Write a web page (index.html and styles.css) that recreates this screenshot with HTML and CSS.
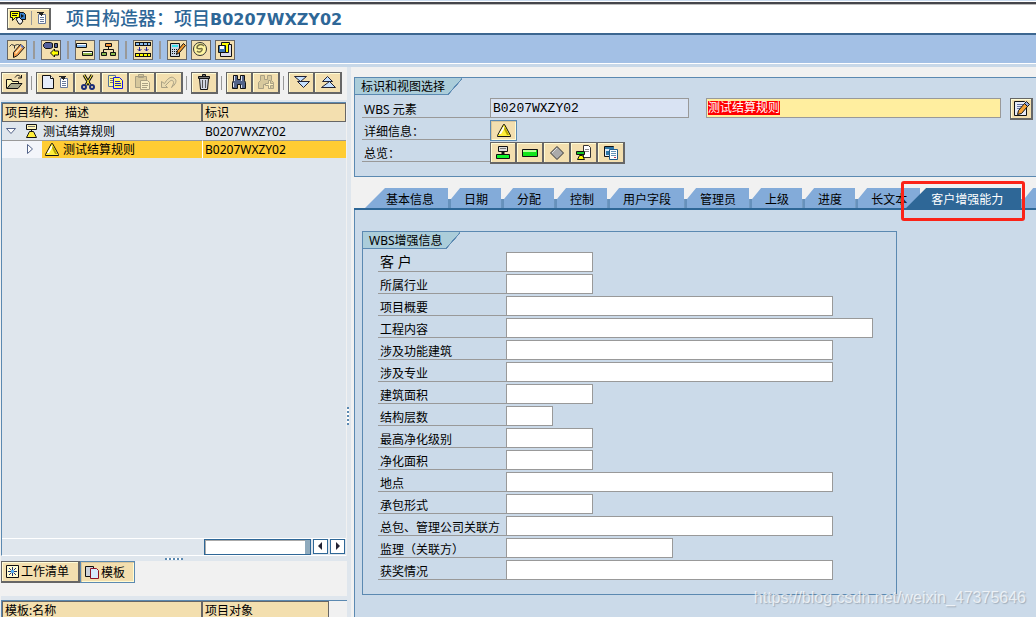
FILE: index.html
```html
<!DOCTYPE html>
<html lang="zh-CN">
<head>
<meta charset="utf-8">
<meta name="viewport" content="width=device-width, initial-scale=1">
<title>项目构造器：项目B0207WXZY02</title>
<link rel="stylesheet" href="styles.css">
</head>
<body>
<svg class="defs" aria-hidden="true">
  <symbol id="i-menu" viewBox="0 0 12 16"><path fill="#fff" stroke="#68799a" d="M2.500 4.500h7v9h-7z"/><path fill="#222" d="M1 2h7v1H7v2H6v1H5V5H4V4H3V3H1z"/><path stroke="#68799a" d="M4 7.500h4M4 9.500h4M4 11.500h4"/></symbol>
  <symbol id="i-tri" viewBox="0 0 16 16"><path fill="#ffef3a" stroke="#111" stroke-linejoin="round" d="M7.500 1.500h1l6 11v1h-13v-1z"/><path fill="#fff" d="M7 4h1v2L5 11H3z"/><path fill="#b5a400" d="M9 4l4 8h-2L8 6z"/></symbol>
  <symbol id="i-binoc" viewBox="0 0 18 18"><path fill="#536389" stroke="#111" d="M3.500 2.500h4v4h3v-4h4v5l1 2v6h-5v-4h-3v4h-5v-6l1-2z"/><path fill="#dfe5f5" d="M4 3h1v5H4zM11 3h1v5h-1zM3 10h1v4H3zM11 12h1v3h-1z"/></symbol>
</svg>

<header class="titlebar">
  <button class="btn title-btn" aria-label="服务">
    <svg width="17" height="16" viewBox="0 0 17 16"><path fill="#ff0" stroke="#111" d="M.5 1.500h9v6h-4l-3 3v-3h-2z"/><path stroke="#111" d="M2 3.500h6M2 5.500h5"/><path fill="#3982cd" stroke="#111" d="M9.500 2.500h4l2 2v5h-6z"/><path fill="#111" d="m11 4 3 2-3 2z"/><path fill="#eee" stroke="#111" d="m6 9 3-2 4 4-2 3H9z"/></svg>
    <span class="bar"></span>
    <svg width="12" height="16"><use href="#i-menu"/></svg>
  </button>
  <h1>项目构造器：项目<b>B0207WXZY02</b></h1>
</header>

<div class="appbar">
  <button class="flat" aria-label="更改"><svg width="18" height="18" viewBox="0 0 18 18"><path fill="none" stroke="#333" d="m1.500 5.500 2-2 3 1v3M6.500 4.500l3-1 3 1"/><path fill="#f29a4a" stroke="#111" d="m5.500 11.500 7-8 4 3-7 8-4 2z"/><path fill="#ffe9b8" d="m7 12 6-7 1 1-6 7z"/><path fill="#5f77c8" d="m12.500 4.500 1-1 2 2-1 2z"/></svg></button>
  <span class="sep"></span>
  <button class="flat" aria-label="转到"><svg width="18" height="18" viewBox="0 0 18 18"><path fill="#53609c" stroke="#111" d="M3.500 1.500h5l2 1v4l-2 1h-5l-2-2v-2z"/><path fill="#53609c" stroke="#111" d="M12.500 2.500h3v4h-3z"/><path fill="#ff0" stroke="#111" d="m8.500 12 4-4v2h4v4h-4v2z"/></svg></button>
  <span class="sep"></span>
  <button class="flat" aria-label="甘特图"><svg width="18" height="18" viewBox="0 0 18 18"><path fill="#8bbced" stroke="#111" d="M.5 2.500h10v4H.5z"/><path fill="#8fb34b" stroke="#111" d="M6.500 10.500h10v4h-10z"/><path stroke="#fff" d="M1 3.500h9M7 11.500h9"/></svg></button>
  <button class="flat" aria-label="层次图"><svg width="18" height="18" viewBox="0 0 18 18"><path fill="none" stroke="#111" d="M8.500 5v3M3.500 11V8.500h10V11"/><path fill="#f5963a" stroke="#111" d="M5.500 2.500h6v3h-6z"/><path fill="#86b64c" stroke="#111" d="M1.500 11.500h5v3h-5zM10.500 11.500h5v3h-5z"/></svg></button>
  <span class="sep"></span>
  <button class="flat" aria-label="网络"><svg width="18" height="18" viewBox="0 0 18 18"><path fill="#111" d="M1 1h16v4H1zM1 12h16v4H1z"/><path fill="#8bbced" d="M2 2h3v2H2zM6 2h3v2H6zM10 2h3v2h-3zM14 2h2v2h-2z"/><path fill="#ff0" d="M2 13h3v2H2zM6 13h3v2H6zM10 13h3v2h-3zM14 13h2v2h-2z"/><path stroke="#229" fill="none" d="M5.500 6v4M3.500 8l2 2 2-2M12.500 6v4M10.500 8l2 2 2-2"/></svg></button>
  <span class="sep"></span>
  <button class="flat" aria-label="计算"><svg width="18" height="18" viewBox="0 0 18 18"><path fill="#c9d5e1" stroke="#111" d="M2.500 2.500h9v13h-9z"/><path fill="#3de2ed" d="M4 4h6v2H4z"/><path stroke="#111" stroke-dasharray="1 1" d="M4 8.500h6M4 10.500h6M4 12.500h6"/><path fill="#f19a31" stroke="#111" d="m9.500 9.500 6-7 2 2-6 7-3 2z"/></svg></button>
  <button class="flat" aria-label="成本"><svg width="18" height="18" viewBox="0 0 18 18"><circle cx="8" cy="8" r="6.500" fill="#fff6a0" stroke="#333"/><path stroke="#777044" stroke-width="1.500" fill="none" d="M12 5C9 2 5 4 5 7c2 2 6-1 5 2-1 2-3 3-5 1"/></svg></button>
  <button class="flat" aria-label="文档"><svg width="18" height="18" viewBox="0 0 18 18"><path fill="#ff0" stroke="#111" d="M5.500 1.500h8v10h-8z"/><path fill="#d9dcef" stroke="#111" d="M12.500 3.500h3v12h-11v-4h8z"/><path fill="#3a75b4" stroke="#111" d="M2.500 4.500h7v7h-7z"/><path fill="#fff" d="M4 5h4v3H4z"/></svg></button>
</div>

<main class="workspace">
  <section class="left">
    <div class="toolbar">
      <button class="btn" aria-label="打开"><svg width="18" height="18" viewBox="0 0 18 18"><path fill="none" stroke="#111" d="M10 4.500c2-3 4-3 6 0M16.500 2v3H13"/><path fill="#fff6b7" stroke="#111" d="M1.500 15.500v-9h5l1 2h6v3"/><path fill="#a6a68a" stroke="#111" d="m2 15.500 4-5h11l-4 5z"/></svg></button>
      <span class="sep"></span>
      <div class="group">
        <button class="btn wide" aria-label="创建"><svg width="16" height="18" viewBox="0 0 16 18"><path fill="#e6edfa" stroke="#111" d="M2.500 2.500h8l3 3v10h-11z"/><path fill="#fff" stroke="#111" d="M10.500 2.500v3h3"/></svg><svg width="12" height="16"><use href="#i-menu"/></svg></button>
        <button class="btn" aria-label="剪切"><svg width="18" height="18" viewBox="0 0 18 18"><path stroke="#111" stroke-width="3" d="m5 2 6 10M13 2 7 12"/><path stroke="#ffed43" d="m5 2 6 10M13 2 7 12"/><g fill="none" stroke="#1c2c78" stroke-width="2"><circle cx="5" cy="14" r="2"/><circle cx="13" cy="14" r="2"/></g></svg></button>
        <button class="btn" aria-label="复制"><svg width="18" height="18" viewBox="0 0 18 18"><path fill="#fff799" stroke="#55749b" d="M2.500 2.500h7v11h-7z"/><path stroke="#777" d="M4 5.500h4M4 7.500h4M4 9.500h4"/><path fill="#fff66b" stroke="#1414ea" d="M7.500 4.500h6l3 3v8h-9z"/><path stroke="#1b29c6" d="M9 8.500h5M9 10.500h6M9 12.500h6"/></svg></button>
        <button class="btn" disabled aria-label="粘贴"><svg width="18" height="18" viewBox="0 0 18 18"><path fill="#d6c79c" stroke="#a9a083" d="M2.500 3.500h11v11h-11zM5.500 1.500h5v3h-5z"/><path fill="#f8edc5" stroke="#aaa184" d="M7.500 7.500h7l2 2v7h-9z"/><path stroke="#aaa184" d="M9 10.500h6M9 12.500h6M9 14.500h5"/></svg></button>
        <button class="btn" disabled aria-label="撤消"><svg width="18" height="18" viewBox="0 0 18 18"><path fill="#eadbb0" stroke="#aaa184" d="M1.500 8.500v6h6l-2-2 4-4c2-2 4-1 4 1s-1 3-2 5c4-3 6-7 3-9-3-3-6 0-8 2l-2 3z"/></svg></button>
      </div>
      <span class="sep"></span>
      <button class="btn" aria-label="删除"><svg width="18" height="18" viewBox="0 0 18 18"><path fill="#d2d7e2" stroke="#111" d="M4.500 5.500h9l-1 11h-7z"/><path fill="#777" stroke="#111" d="M3.500 3.500h11v2h-11zM7.500 1.500h3v2h-3z"/><path stroke="#555" d="M7.500 7v8M10.500 7v8"/></svg></button>
      <span class="sep"></span>
      <div class="group">
        <button class="btn" aria-label="查找"><svg width="18" height="18"><use href="#i-binoc"/></svg></button>
        <button class="btn" disabled aria-label="查找下一个"><svg width="18" height="18" viewBox="0 0 18 18"><path fill="#d8c99d" stroke="#aaa184" d="M3.500 2.500h4v4h3v-4h4v5l2 2v6h-5v-4H6.500v4h-5v-6l2-2z"/><path fill="#fff0bd" stroke="#aaa184" d="M11.500 7.500h2v3h3v2h-3v3h-2v-3h-3v-2h3z"/></svg></button>
      </div>
      <span class="sep"></span>
      <div class="group">
        <button class="btn" aria-label="展开"><svg width="18" height="18" viewBox="0 0 18 18"><path fill="#c5e0ff" stroke="#223" d="M2.500 3.500h12l-6 5zM5.500 8.500h12l-6 6z"/></svg></button>
        <button class="btn" aria-label="折叠"><svg width="18" height="18" viewBox="0 0 18 18"><path fill="#c5e0ff" stroke="#223" d="M3.500 8.500h10l-5-5zM2.500 14.500h14l-6-6z"/></svg></button>
      </div>
    </div>

    <div class="tree">
      <table class="grid">
        <colgroup><col class="c1"><col></colgroup>
        <thead><tr><th>项目结构：描述</th><th>标识</th></tr></thead>
        <tbody>
          <tr>
            <td><div class="node"><svg class="arrow" width="12" height="12" viewBox="0 0 12 12"><path fill="#fff" stroke="#536389" d="M1.500 3.500h9l-4.500 5z"/></svg><svg width="16" height="16" viewBox="0 0 16 16"><path fill="#fff4b4" stroke="#111" d="M2.500 1.500h10v5h-10z"/><path stroke="#777" d="M4 3.500h7"/><path fill="#ffef3a" stroke="#111" d="M5.500 8.500h4l3 6h-10z"/><path stroke="#111" d="M7.500 6v3"/></svg><span>测试结算规则</span></div></td>
            <td>B0207WXZY02</td>
          </tr>
          <tr class="selected">
            <td><div class="node"><span class="indent"><svg width="12" height="12" viewBox="0 0 12 12"><path fill="#fff" stroke="#536389" d="m3.500 1.500 5 4.500-5 4.500z"/></svg></span><svg width="16" height="16"><use href="#i-tri"/></svg><span>测试结算规则</span></div></td>
            <td>B0207WXZY02</td>
          </tr>
        </tbody>
      </table>
      <div class="scroll">
        <span class="track"></span>
        <button aria-label="向左滚动"><svg width="13" height="13" viewBox="0 0 13 13"><path fill="#223" d="M8 2v8L4 6z"/></svg></button>
        <button aria-label="向右滚动"><svg width="13" height="13" viewBox="0 0 13 13"><path fill="#223" d="M5 2v8l4-4z"/></svg></button>
      </div>
    </div>
    <div class="hsplit"><span></span></div>
    <div class="views">
      <button class="btn view"><svg width="14" height="16" viewBox="0 0 14 16"><path fill="#fffcd2" stroke="#111" d="M.5 1.500h12v12H.5z"/><path stroke="#1d3474" d="M2 7.500h9M6.500 3v9M3 4l7 7M10 4l-7 7"/><path fill="#57aef1" d="M5 6h3v3H5z"/></svg>工作清单</button>
      <button class="btn view pressed"><svg width="15" height="16" viewBox="0 0 15 16"><path fill="#ccd2d8" stroke="#111" d="M.5 1.500h8v10h-8z"/><path fill="#d6eafd" stroke="#8e1125" d="M5.500 3.500h6l2 2v8h-8z"/></svg>模板</button>
    </div>
    <div class="templates">
      <table class="grid">
        <colgroup><col class="c1"><col></colgroup>
        <thead><tr><th>模板:名称</th><th>项目对象</th></tr></thead>
      </table>
    </div>
  </section>

  <div class="vsplit"><span></span></div>

  <section class="right">
    <section class="box ident">
      <h2>标识和视图选择</h2>
      <div class="row">
        <label for="wbs">WBS 元素</label>
        <input id="wbs" class="code" value="B0207WXZY02" readonly>
        <div class="desc"><input id="wbs-desc" aria-label="WBS 描述" readonly><mark>测试结算规则</mark></div>
        <button class="btn edit" aria-label="编辑长文本"><svg width="18" height="18" viewBox="0 0 18 18"><path fill="#e7ebf8" stroke="#111" d="M2.500 1.500h10l2 2v12h-12z"/><path stroke="#6874a2" d="M5 4.500h6M5 6.500h5M5 8.500h4"/><path fill="#f7a436" stroke="#111" d="m6.500 10.500 6-7 3 3-6 7-4 1z"/><path fill="#99abdc" stroke="#111" d="m12.500 3.500 2-2 3 3-2 2z"/></svg></button>
      </div>
      <div class="row"><span class="label">详细信息：</span><button class="btn pressed" aria-label="详细信息"><svg width="16" height="16"><use href="#i-tri"/></svg></button></div>
      <div class="row"><span class="label">总览：</span>
        <div class="group">
          <button class="btn" aria-label="WBS 总览"><svg width="16" height="18" viewBox="0 0 16 18"><path fill="#ddd" stroke="#111" d="M3.500 2.500h9v5h-9z"/><path stroke="#777" d="M5 4.500h6"/><path stroke="#111" stroke-width="3" d="M8 7v3"/><path fill="#0cf52b" stroke="#111" d="M1.500 10.500h13v4h-13z"/></svg></button>
          <button class="btn" aria-label="活动总览"><svg width="18" height="18" viewBox="0 0 18 18"><path fill="#13e51e" stroke="#111" d="M1.500 5.500h15v7h-15z"/><path fill="#bdff9b" d="M2 6h13v2H2z"/></svg></button>
          <button class="btn" aria-label="里程碑"><svg width="18" height="18" viewBox="0 0 18 18"><path fill="#aaa" stroke="#333" d="m9 2.500 6.500 6.500L9 15.500 2.500 9z"/><path stroke="#ddd" d="m4 9 5-5"/></svg></button>
          <button class="btn" aria-label="文本总览"><svg width="18" height="18" viewBox="0 0 18 18"><path fill="#fff" stroke="#333" d="M8.500 1.500h5l2 2v10h-7z"/><path stroke="#888" d="M10 5.500h4M10 7.500h4"/><path fill="#15c627" stroke="#111" d="M1.500 7.500h8v3h-8z"/><path fill="#ff0" stroke="#111" d="M4.500 11.500h3l2 4h-7z"/></svg></button>
          <button class="btn" aria-label="文档总览"><svg width="18" height="18" viewBox="0 0 18 18"><path fill="#dceaf9" stroke="#111" d="M2.500 2.500h9v10h-9z"/><path fill="#2e78a9" d="M3 3h9v2H3zM4 7h3v4H4z"/><path fill="#fff" stroke="#205a89" d="M7.500 5.500h8v10h-8z"/><path stroke="#6593b7" d="M9 7.500h5M9 9.500h5M9 11.500h5"/><path stroke="#b63555" d="M12 13.500h2"/></svg></button>
        </div>
      </div>
    </section>

    <nav class="tabs" role="tablist">
      <button class="tab first" role="tab">基本信息</button>
      <button class="tab" role="tab">日期</button>
      <button class="tab" role="tab">分配</button>
      <button class="tab" role="tab">控制</button>
      <button class="tab" role="tab">用户字段</button>
      <button class="tab" role="tab">管理员</button>
      <button class="tab" role="tab">上级</button>
      <button class="tab" role="tab">进度</button>
      <button class="tab" role="tab">长文本</button>
      <div class="current"><button class="tab active" role="tab" aria-selected="true">客户增强能力</button><span class="callout"></span></div>
      <button class="tab more" role="tab" aria-label="更多"></button>
    </nav>

    <div class="panel">
      <form class="box fields">
        <h2>WBS增强信息</h2>
        <div class="row"><label class="large" for="f1">客 户</label><input id="f1" class="m"></div>
        <div class="row"><label for="f2">所属行业</label><input id="f2" class="m"></div>
        <div class="row"><label for="f3">项目概要</label><input id="f3" class="xl"></div>
        <div class="row"><label for="f4">工程内容</label><input id="f4" class="xxl"></div>
        <div class="row"><label for="f5">涉及功能建筑</label><input id="f5" class="xl"></div>
        <div class="row"><label for="f6">涉及专业</label><input id="f6" class="xl"></div>
        <div class="row"><label for="f7">建筑面积</label><input id="f7" class="m"></div>
        <div class="row"><label for="f8">结构层数</label><input id="f8" class="s"></div>
        <div class="row"><label for="f9">最高净化级别</label><input id="f9" class="m"></div>
        <div class="row"><label for="f10">净化面积</label><input id="f10" class="m"></div>
        <div class="row"><label for="f11">地点</label><input id="f11" class="xl"></div>
        <div class="row"><label for="f12">承包形式</label><input id="f12" class="m"></div>
        <div class="row"><label for="f13">总包、管理公司关联方</label><input id="f13" class="xl"></div>
        <div class="row"><label for="f14">监理（关联方）</label><input id="f14" class="l"></div>
        <div class="row"><label for="f15">获奖情况</label><input id="f15" class="xl"></div>
      </form>
    </div>
  </section>
</main>
<span class="watermark">https://blog.csdn.net/weixin_47375646</span>
</body>
</html>
```

FILE: styles.css
```css
:root {
  --tan: #f3dfaf;
  --pane: #cbdae9;
  --tree: #dfe6ed;
  --chrome: #f1f1f1;
  --line: #5b89b1;
  --deep: #2e6797;
  --grey: #999;
}
* { box-sizing: border-box; }
body {
  margin: 0;
  height: 100vh;
  display: flex;
  flex-direction: column;
  overflow: hidden;
  position: relative;
  background: var(--chrome);
  color: #000;
  font: 12px/18px "Noto Sans", "Noto Sans CJK SC", sans-serif;
}
button, input { font: inherit; color: inherit; margin: 0; padding: 0; border-radius: 0; }
svg { display: block; flex: none; }
.defs { position: absolute; width: 0; height: 0; }

.titlebar {
  flex: none;
  height: 35px;
  padding: 4px 7px 0;
  display: flex;
  align-items: center;
  gap: 15px;
  background: #fff;
  border-bottom: 2px solid #3c6690;
  box-shadow: inset 0 1px #cbdcf0, inset 0 2px #fff, inset 0 4px #45454b, inset 0 5px #bbb;
}
h1 { margin: 0; font-size: 18px; line-height: 24px; font-weight: 500; color: var(--deep); white-space: nowrap; }
h1 b { font: bold 16px/24px "DejaVu Sans", sans-serif; }

.btn {
  flex: none;
  display: flex;
  align-items: center;
  justify-content: center;
  width: 27px;
  height: 22px;
  background: var(--tan);
  border: 1px solid #666;
  border-width: 1px 2px 2px 1px;
  box-shadow: inset 1px 1px #fffcd6;
}
.group .btn + .btn { border-left: 0; }
.title-btn { width: 44px; gap: 4px; }
.bar { width: 1px; height: 14px; background: #999; }
.wide { width: 39px; gap: 2px; }
.pressed { border: 1px solid var(--line); box-shadow: inset 1px 1px #d9c69b, inset -1px -1px #fffcd6; }
.group { display: flex; }

.appbar {
  flex: none;
  height: 32px;
  padding: 0 7px;
  display: flex;
  align-items: center;
  gap: 4px;
  background: #a3c0e5;
  border-bottom: 3px solid #c8d8e8;
  box-shadow: inset 0 -1px #fff;
}
.flat { width: 20px; height: 20px; flex: none; display: flex; background: var(--tan); border: 1px solid #666; }
.sep { flex: none; width: 2px; height: 18px; background: #999; }
.appbar .sep { margin: 0 2px; }

.workspace { flex: 1; min-height: 0; display: flex; }
.left { flex: none; width: 347px; padding-left: 1px; display: flex; flex-direction: column; }
.toolbar { flex: none; height: 35px; display: flex; align-items: center; gap: 3px; padding-bottom: 2px; border-bottom: 2px solid var(--tree); }
.toolbar .sep { width: 1px; height: 14px; margin-right: 1px; }

.tree { flex: 1; min-height: 0; display: flex; flex-direction: column; justify-content: space-between; margin-right: 1px; background: var(--tree); border-top: 1px solid var(--line); border-left: 1px solid var(--line); border-bottom: 1px solid #fff; }
.grid { width: 100%; table-layout: fixed; border-collapse: separate; border-spacing: 0; }
.c1 { width: 200px; }
.grid th { height: 19px; padding: 0 2px; text-align: left; font-weight: 400; line-height: 16px; background: var(--tan); border: 1px solid #666; }
.grid td { height: 18px; padding: 0; line-height: 17px; white-space: nowrap; }
.grid td + td { padding-left: 3px; }
.selected td { background: #ffcc33; border-top: 1px solid #999; }
.selected td + td { border-left: 1px solid #fff; padding-left: 2px; }
.node { display: flex; align-items: center; height: 17px; }
.arrow { margin: 0 7px 0 3px; }
.node span:last-child { margin-left: 3px; }
.node .indent { width: 40px; height: 17px; padding: 2px 0 0 22px; background: #f3f5fa; margin-right: 2px; }

.scroll { height: 17px; padding-right: 1px; border-top: 1px solid #fff; display: flex; gap: 2px; justify-content: flex-end; }
.track { width: 107px; height: 16px; background: #fff; border: 1px solid var(--deep); border-right: 6px solid #8faabd; outline: 1px solid var(--deep); outline-offset: -1px; box-shadow: inset 1px 1px #aaa; }
.scroll button { width: 15px; height: 15px; display: flex; background: #fff; border: 1px solid var(--deep); }
.hsplit { flex: none; height: 5px; display: flex; justify-content: center; padding-top: 2px; background: var(--tree); }
.hsplit span { width: 18px; height: 2px; background: repeating-linear-gradient(90deg, var(--line) 0 2px, #fff 2px 4px); }
.views { flex: none; height: 39px; display: flex; align-items: flex-start; border-bottom: 4px solid var(--tree); }
.view { width: auto; padding: 1px 9px 0 4px; gap: 1px; }
.templates { flex: none; height: 17px; overflow: hidden; padding-right: 18px; border-top: 1px solid var(--line); border-left: 1px solid var(--line); }
.templates th { line-height: 18px; }

.vsplit { flex: none; width: 4px; background: var(--tree); display: flex; flex-direction: column; margin-right: 3px; }
.vsplit::before { content: ""; flex: 64; }
.vsplit::after { content: ""; flex: 36; }
.vsplit span { width: 2px; height: 18px; background: repeating-linear-gradient(var(--line) 0 2px, #fff 2px 4px); }

.right { flex: 1; min-width: 0; display: flex; flex-direction: column; overflow: hidden; padding-top: 10px; }
.box { border: 1px solid var(--line); background: var(--pane); }
.box h2 {
  margin: 0;
  width: max-content;
  height: 17px;
  padding: 0 17px 0 6px;
  font-size: 12px;
  line-height: 17px;
  font-weight: 400;
  background:
    linear-gradient(to bottom right, #abcdda 49%, var(--line) 50%, var(--line) 54%, var(--pane) 55%) right top / 15px 17px no-repeat,
    linear-gradient(var(--line), var(--line)) left bottom / calc(100% - 15px) 1px no-repeat,
    linear-gradient(#abcdda, #abcdda) left top / calc(100% - 15px) 100% no-repeat;
}
.ident { flex: none; height: 100px; border-right: 0; padding-right: 3px; }
.row { display: flex; height: 20px; margin-top: 2px; }
.row label, .row .label { flex: none; width: 128px; padding: 3px 0 0 2px; line-height: 18px; border-bottom: 1px solid var(--grey); white-space: nowrap; }
.row input { height: 20px; border: 1px solid var(--grey); background: #fff; outline: 0; }
.ident .row label, .ident .row .label { margin-left: 7px; }
.ident .row:nth-child(2) { margin-top: 3px; }
.row input.code { flex: none; width: 199px; padding: 0 2px; background: #d9e3f3; font: 13px "Liberation Mono", monospace; }
.desc { flex: 1; margin: 0 9px 0 17px; display: grid; }
.desc > * { grid-area: 1 / 1; }
.row .desc input { width: 100%; background: #ffee9f; }
.desc mark { place-self: center start; margin-left: 2px; height: 14px; line-height: 14px; background: #f00; color: #fff; }
.edit { width: 23px; }
.ident .row .pressed { height: 21px; }

.tabs { flex: none; display: flex; height: 33px; padding: 11px 0 0 11px; border-bottom: 2px solid var(--deep); }
.tab {
  flex: none;
  height: 20px;
  padding: 3px 13px 0 16px;
  line-height: 18px;
  border: 0;
  background: linear-gradient(90deg, #6691bc 3px, #83abd9 3px);
  clip-path: polygon(0 11px, 3px 11px, 12px 0, 100% 0, 100% 100%, 0 100%);
}
.first { padding: 3px 14px 0 21px; background: #83abd9; clip-path: polygon(20px 0, 100% 0, 100% 100%, 0 100%); }
.current { flex: none; position: relative; margin-left: -14px; }
.active { padding: 3px 18px 0 25px; background: var(--deep); color: #fff; clip-path: polygon(20px 0, 100% 0, 100% 100%, 0 100%); }
.more { width: 60px; }
.callout { position: absolute; z-index: 1; inset: -7px -4px -13px -5px; border: 3px solid #fb2318; border-radius: 3px; pointer-events: none; }

.panel { flex: 1; min-height: 0; padding: 21px 7px 0; border-left: 1px solid var(--line); background: var(--pane); }
.fields { width: fit-content; padding: 0 23px 14px 0; }
.fields h2 { margin-bottom: 3px; }
.fields .row { margin-left: 15px; }
.fields .row .large { font-size: 14px; padding-top: 1px; }
.s { width: 47px; }
.m { width: 87px; }
.l { width: 167px; }
.xl { width: 327px; }
.xxl { width: 367px; }

.watermark { position: absolute; right: 10px; bottom: 9px; font: 16px/20px "Liberation Sans", sans-serif; color: rgba(255, 255, 255, 0.7); text-shadow: 1px 1px 1px rgba(100, 110, 120, 0.4); }
```
